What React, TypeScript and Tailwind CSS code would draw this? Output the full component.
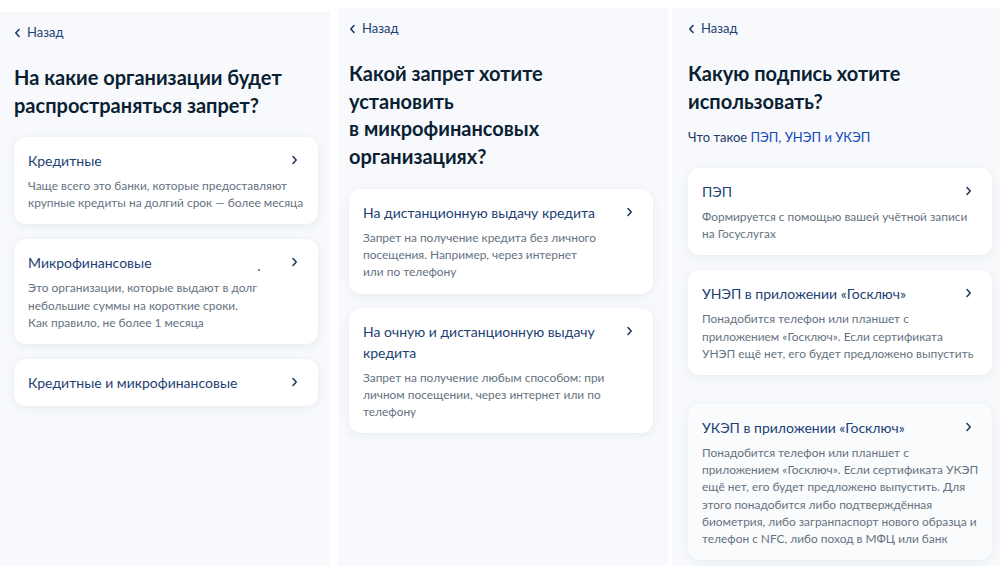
import { FC } from "react";

type Item = { title: string; text?: string[]; muted?: boolean };

const Chevron: FC<{ left?: boolean }> = ({ left }) => (
  <svg width="7" height="10" viewBox="0 0 7 10" fill="none" className="shrink-0">
    <path
      d={left ? "M5 1.5 L1.8 5 L5 8.5" : "M2 1.5 L5.2 5 L2 8.5"}
      stroke={left ? "#1d3a6b" : "#233a5e"}
      strokeWidth="1.6"
      strokeLinecap="round"
      strokeLinejoin="round"
    />
  </svg>
);

const Back: FC = () => (
  <div className="flex h-[20px] items-center gap-[6px] text-[13px] text-[#1d3f73]">
    <Chevron left />
    <span>Назад</span>
  </div>
);

const Card: FC<{ item: Item }> = ({ item }) => (
  <div
    className={`w-[304px] rounded-[12px] px-[14px] pt-[13px] pb-[13px] shadow-[0_2px_8px_rgba(40,60,100,0.08)] ${
      item.muted ? "bg-[#fafbfd]" : "bg-white"
    }`}
  >
    <div className="flex items-start justify-between gap-4">
      <div className="text-[14px] leading-[21px] text-[#1d3f73]">
        {item.title.split("\n").map((l) => (
          <div key={l}>{l}</div>
        ))}
      </div>
      <div className="mt-[5px] mr-[6px]">
        <Chevron />
      </div>
    </div>
    {item.text && (
      <div className="mt-[6px] text-[11.9px] leading-[17.2px] whitespace-nowrap text-[#66727f]">
        {item.text.map((l) => (
          <div key={l}>{l}</div>
        ))}
      </div>
    )}
  </div>
);

const Heading: FC<{ lines: string[] }> = ({ lines }) => (
  <h1 className="text-[20px] leading-[27.5px] font-bold text-[#0b1f33]">
    {lines.map((l) => (
      <div key={l}>{l}</div>
    ))}
  </h1>
);

export default function App() {
  return (
    <div
      className="flex h-[566px] w-[1000px] overflow-hidden bg-white"
      style={{ fontFamily: "Lato, 'Noto Sans', sans-serif" }}
    >
      {/* first screen */}
      <section className="mt-[12px] w-[330px] shrink-0 bg-[#f7f9fc] pl-[14px] pt-[11px]">
        <Back />
        <div className="mt-[21px]">
          <Heading lines={["На какие организации будет", "распространяться запрет?"]} />
        </div>
        <div className="mt-[18px] flex flex-col gap-[15px]">
          <Card
            item={{
              title: "Кредитные",
              text: [
                "Чаще всего это банки, которые предоставляют",
                "крупные кредиты на долгий срок — более месяца",
              ],
            }}
          />
          <div className="relative">
            <Card
              item={{
                title: "Микрофинансовые",
                text: [
                  "Это организации, которые выдают в долг",
                  "небольшие суммы на короткие сроки.",
                  "Как правило, не более 1 месяца",
                ],
              }}
            />
            <span className="absolute left-[244px] top-[30px] h-[2px] w-[2px] rounded-full bg-[#4a5a70]" />
          </div>
          <Card item={{ title: "Кредитные и микрофинансовые" }} />
        </div>
      </section>

      <div className="w-[8px] shrink-0" />

      {/* second screen */}
      <section className="mt-[8px] w-[330px] shrink-0 bg-[#f7f9fc] pl-[11px] pt-[11px]">
        <Back />
        <div className="mt-[21px]">
          <Heading
            lines={["Какой запрет хотите", "установить", "в микрофинансовых", "организациях?"]}
          />
        </div>
        <div className="mt-[19px] flex flex-col gap-[14px]">
          <Card
            item={{
              title: "На дистанционную выдачу кредита",
              text: [
                "Запрет на получение кредита без личного",
                "посещения. Например, через интернет",
                "или по телефону",
              ],
            }}
          />
          <Card
            item={{
              title: "На очную и дистанционную выдачу\nкредита",
              text: [
                "Запрет на получение любым способом: при",
                "личном посещении, через интернет или по",
                "телефону",
              ],
            }}
          />
        </div>
      </section>

      <div className="w-[4px] shrink-0" />

      {/* third screen */}
      <section className="mt-[8px] flex-1 bg-[#f7f9fc] pl-[16px] pt-[11px]">
        <Back />
        <div className="mt-[21px]">
          <Heading lines={["Какую подпись хотите", "использовать?"]} />
        </div>
        <div className="mt-[14px] text-[13px] leading-[17px] text-[#1d3a6b]">
          Что такое <span className="text-[#1447b8]">ПЭП, УНЭП и УКЭП</span>
        </div>
        <div className="mt-[22px] flex flex-col">
          <Card
            item={{
              title: "ПЭП",
              text: ["Формируется с помощью вашей учётной записи", "на Госуслугах"],
            }}
          />
          <div className="mt-[15px]">
            <Card
              item={{
                title: "УНЭП в приложении «Госключ»",
                text: [
                  "Понадобится телефон или планшет с",
                  "приложением «Госключ». Если сертификата",
                  "УНЭП ещё нет, его будет предложено выпустить",
                ],
              }}
            />
          </div>
          <div className="mt-[29px]">
            <Card
              item={{
                title: "УКЭП в приложении «Госключ»",
                muted: true,
                text: [
                  "Понадобится телефон или планшет с",
                  "приложением «Госключ». Если сертификата УКЭП",
                  "ещё нет, его будет предложено выпустить. Для",
                  "этого понадобится либо подтверждённая",
                  "биометрия, либо загранпаспорт нового образца и",
                  "телефон с NFC, либо поход в МФЦ или банк",
                ],
              }}
            />
          </div>
        </div>
      </section>
    </div>
  );
}
